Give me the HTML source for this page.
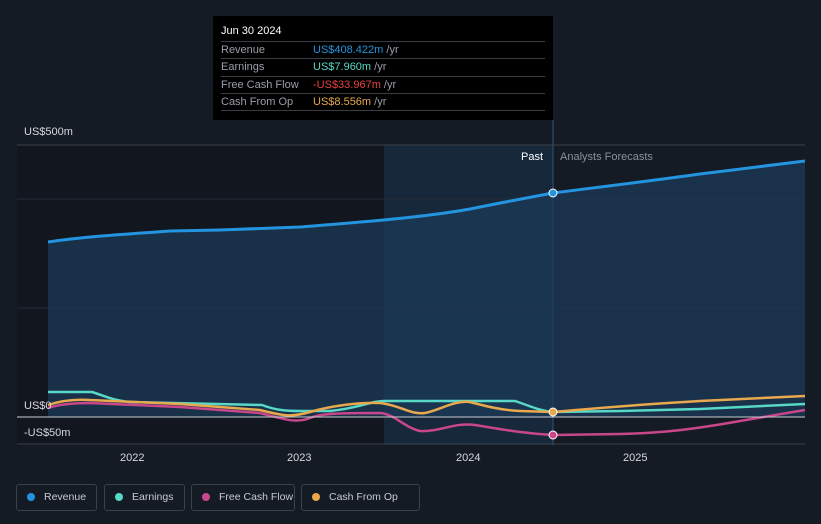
<!DOCTYPE html>
<html><head><style>
html,body{margin:0;width:821px;height:524px;overflow:hidden;}
body{background:#151b25;font-family:"Liberation Sans",sans-serif;position:relative;}
.tt{position:absolute;left:213px;top:16px;width:340px;height:104px;background:#000;}
.tt .h{position:absolute;left:8px;top:9px;color:#fff;font-size:11px;}
.row{position:absolute;left:8px;width:324px;border-top:1px solid #3a3d44;height:17px;font-size:11px;color:#9a9ea6;line-height:17px;}
.row span{position:absolute;left:92px;}
.leg{position:absolute;top:484px;height:27px;border:1px solid #3a404c;border-radius:3px;color:#c7cad0;font-size:10.5px;line-height:25px;box-sizing:border-box;white-space:nowrap;}
.leg i{position:absolute;left:10px;top:8px;width:8px;height:8px;border-radius:50%;}
.leg b{font-weight:normal;position:absolute;left:27px;}
</style></head><body>
<svg width="821" height="524" style="position:absolute;left:0;top:0">
<rect x="17" y="145" width="367" height="300" fill="#12161e"/>
<rect x="384" y="145" width="169" height="300" fill="#17283a"/>
<line x1="17" y1="145" x2="805" y2="145" stroke="#3a3f48"/>
<line x1="17" y1="199" x2="805" y2="199" stroke="#252b35"/>
<line x1="17" y1="308" x2="805" y2="308" stroke="#252b35"/>
<line x1="17" y1="444" x2="805" y2="444" stroke="#3a3f48"/>
<line x1="553" y1="120" x2="553" y2="445" stroke="#2e5577"/>
<path d="M48,242 C90,236 130,234 170,231 L220,230 L300,227 C350,223 420,218 470,209 C510,201 553,193 553,193 C600,187 650,181 700,174 L805,161 L805,417 L48,417Z" fill="#1c3a58" opacity="0.75"/>
<path d="M48,242 C90,236 130,234 170,231 L220,230 L300,227 C350,223 420,218 470,209 C510,201 553,193 553,193 C600,187 650,181 700,174 L805,161" fill="none" stroke="#2394df" stroke-width="3"/>
<path d="M48,392 L92,392 C105,396 115,401 130,402 L262,405 C275,410 285,411 300,411 L330,411 C360,408 370,401 385,401 L515,401 C530,406 540,411 553,412 L620,411 L700,409 L805,404" fill="none" stroke="#58d8c6" stroke-width="2.5"/>
<path d="M48,408 C60,404 75,403 90,403 L180,407 L260,413 C280,418 295,424 310,418 C320,414 330,413 380,413 C395,414 405,428 420,431 C440,432 455,422 475,425 C500,429 520,433 553,435 L620,434 C660,433 690,430 740,421 L805,410" fill="none" stroke="#c8478a" stroke-width="2.5"/>
<path d="M48,405 C60,401 75,399 90,400 L180,404 L260,410 C280,415 290,418 310,412 C330,406 360,402 380,403 C400,405 410,415 425,413 C440,410 455,400 470,402 C485,406 500,410 520,411 L553,412 C600,408 630,405 700,401 L805,396" fill="none" stroke="#e8a84d" stroke-width="2.5"/>
<line x1="17" y1="417" x2="805" y2="417" stroke="#c8ccd2" stroke-width="1"/>
<circle cx="553" cy="193" r="4" fill="#2394df" stroke="#fff" stroke-width="1"/>
<circle cx="553" cy="412" r="4" fill="#e8a84d" stroke="#fff" stroke-width="1"/>
<circle cx="553" cy="435" r="4" fill="#c8478a" stroke="#fff" stroke-width="1"/>
<g font-family="Liberation Sans" font-size="11" fill="#d6d8dc">
<text x="24" y="135">US$500m</text>
<text x="24" y="409">US$0</text>
<text x="24" y="436">-US$50m</text>
<text x="120" y="461">2022</text><text x="287" y="461">2023</text><text x="456" y="461">2024</text><text x="623" y="461">2025</text>
<text x="521" y="160" fill="#fff">Past</text>
<text x="560" y="160" fill="#8a9099">Analysts Forecasts</text>
</g>
</svg>
<div class="tt"><div class="h">Jun 30 2024</div>
<div class="row" style="top:25px">Revenue<span><font color="#2394df">US$408.422m</font> /yr</span></div>
<div class="row" style="top:42px">Earnings<span><font color="#58d8c6">US$7.960m</font> /yr</span></div>
<div class="row" style="top:60px">Free Cash Flow<span><font color="#e8413f">-US$33.967m</font> /yr</span></div>
<div class="row" style="top:77px">Cash From Op<span><font color="#e8a84d">US$8.556m</font> /yr</span></div>
<div class="row" style="top:94px;height:0"></div>
</div>
<div class="leg" style="left:16px;width:81px"><i style="background:#2394df"></i><b>Revenue</b></div>
<div class="leg" style="left:104px;width:81px"><i style="background:#58d8c6"></i><b>Earnings</b></div>
<div class="leg" style="left:191px;width:104px"><i style="background:#c8478a"></i><b>Free Cash Flow</b></div>
<div class="leg" style="left:301px;width:119px"><i style="background:#e8a84d"></i><b>Cash From Op</b></div>
</body></html>
